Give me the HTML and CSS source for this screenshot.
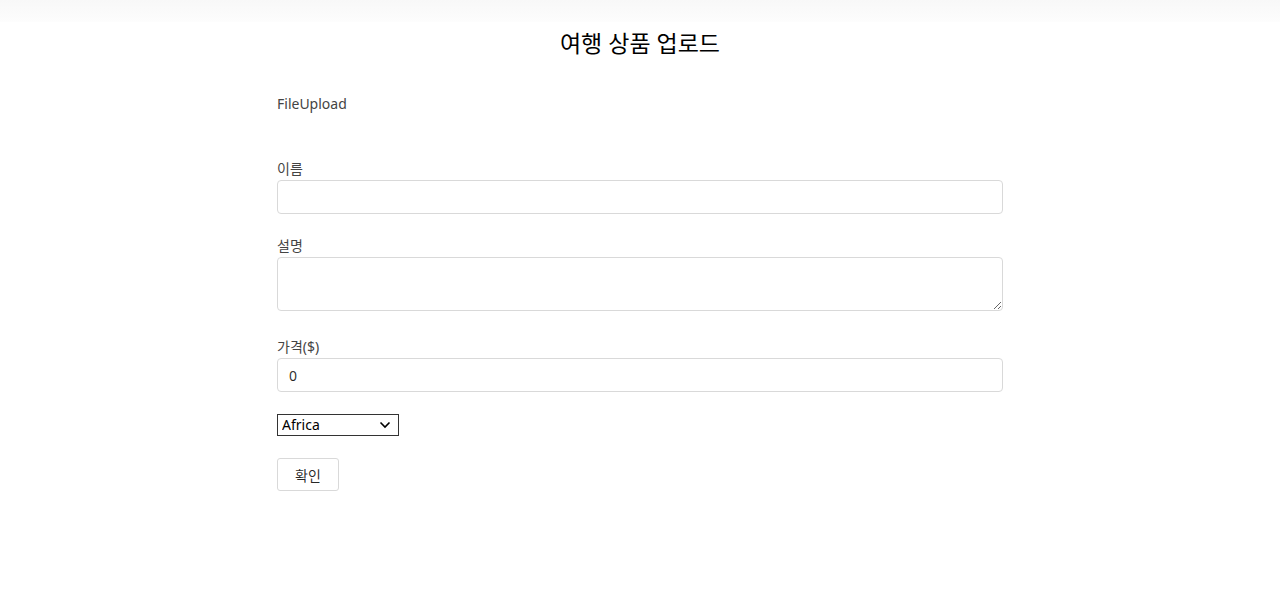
FILE: index.html
```html
<!DOCTYPE html>
<html lang="ko">
	<head>
		<meta charset="UTF-8" />
		<meta name="viewport" content="width=device-width, initial-scale=1.0" />
		<title>여행 상품 업로드</title>
		<link rel="stylesheet" href="styles.css">
	</head>
	<body>
		<div class="top-shade"></div>
		<div class="upload-page">
			<h2 class="page-title">여행 상품 업로드</h2>

			<form class="upload-form" onsubmit="return false">
				<div class="file-upload">FileUpload</div>

				<label class="field-label name-label" for="title">이름</label>
				<input class="text-input" id="title" type="text" />

				<label class="field-label" for="description">설명</label>
				<textarea class="text-area" id="description"></textarea>

				<label class="field-label price-label" for="price">가격($)</label>
				<input class="text-input" id="price" type="number" value="0" />

				<div class="select-wrap">
					<select class="continent-select">
						<option>Africa</option>
						<option>Europe</option>
						<option>Asia</option>
						<option>North America</option>
						<option>South America</option>
						<option>Australia</option>
						<option>Antarctica</option>
					</select>
					<!-- chevron drawn over the native arrow -->
					<svg class="select-arrow" width="12" height="8" viewBox="0 0 12 8">
						<path d="M1.5 1.5 L6 6 L10.5 1.5" fill="none" stroke="#000" stroke-width="1.6" />
					</svg>
				</div>

				<button class="submit-btn" type="submit">확인</button>
			</form>
		</div>
	</body>
</html>
```

FILE: styles.css
```css
body {
	margin: 0;
	background: #fff;
	color: rgba(0, 0, 0, 0.85);
	font-family: "Noto Sans", "Noto Sans CJK KR", sans-serif;
	font-size: 14px;
	line-height: 22px;
}

.top-shade {
	height: 22px;
	background: linear-gradient(#f8f8f8, #fdfdfd);
}

.upload-page {
	width: 726px;
	margin: 0 auto;
}

.page-title {
	margin: 5px 0 0;
	text-align: center;
	font-size: 23px;
	font-weight: 400;
	line-height: 32px;
	color: #000;
}

.upload-form {
	display: flex;
	flex-direction: column;
	align-items: flex-start;
}

.file-upload {
	margin-top: 34px;
	color: #444;
}

.field-label {
	margin-top: 21px;
	color: #444;
}

.name-label {
	margin-top: 43px;
}

.price-label {
	margin-top: 25px;
}

.text-input,
.text-area {
	box-sizing: border-box;
	width: 100%;
	margin: 0;
	padding: 4px 11px;
	border: 1px solid #d9d9d9;
	border-radius: 4px;
	font-family: inherit;
	font-size: 14px;
	color: rgba(0, 0, 0, 0.85);
	background: #fff;
	outline: none;
}

.text-input {
	height: 34px;
}

.text-area {
	height: 54px;
	display: block;
}

.text-input::-webkit-inner-spin-button,
.text-input::-webkit-outer-spin-button {
	-webkit-appearance: none;
	margin: 0;
}

.select-wrap {
	position: relative;
	margin-top: 22px;
	height: 22px;
}

.continent-select {
	-webkit-appearance: none;
	appearance: none;
	box-sizing: border-box;
	width: 122px;
	height: 22px;
	margin: 0;
	padding: 0 4px;
	font-family: inherit;
	font-size: 14px;
	line-height: 20px;
	color: #000;
	border: 1px solid #333;
	border-radius: 0;
	background: #fff;
}

.select-arrow {
	position: absolute;
	right: 8px;
	top: 7px;
	pointer-events: none;
}

.submit-btn {
	margin-top: 22px;
	height: 33px;
	padding: 0 17px;
	border: 1px solid #d9d9d9;
	border-radius: 3px;
	background: #fff;
	color: rgba(0, 0, 0, 0.85);
	font-family: inherit;
	font-size: 14px;
	cursor: pointer;
}
```
